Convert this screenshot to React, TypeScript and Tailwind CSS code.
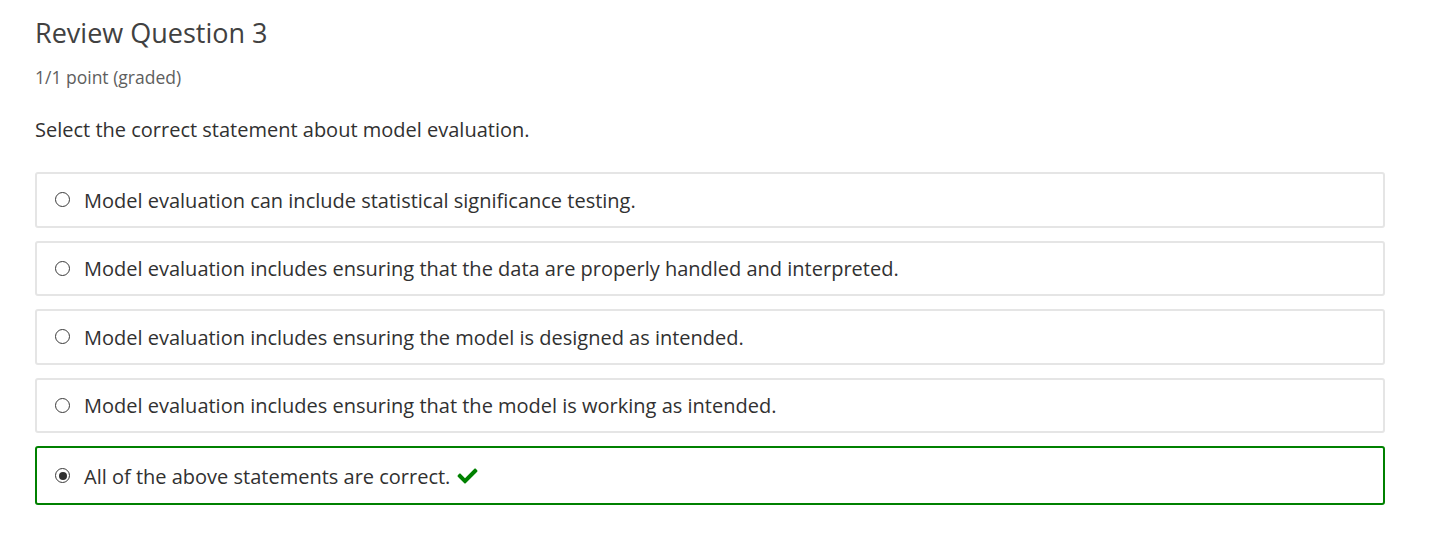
import React from 'react';

const options = [
  'Model evaluation can include statistical significance testing.',
  'Model evaluation includes ensuring that the data are properly handled and interpreted.',
  'Model evaluation includes ensuring the model is designed as intended.',
  'Model evaluation includes ensuring that the model is working as intended.',
  'All of the above statements are correct.',
];

const selected = 4;

const Radio: React.FC<{ checked: boolean }> = ({ checked }) => (
  <span className="flex h-[15px] w-[15px] shrink-0 items-center justify-center rounded-full border border-[#3a3a3a] bg-white">
    {checked && <span className="h-[8px] w-[8px] rounded-full bg-[#313131]" />}
  </span>
);

export default function App() {
  return (
    <div className="min-h-[551px] bg-white font-['Open_Sans',sans-serif] text-[#313131]">
      <div className="w-[1420px] px-[35px] pt-[16px]">
        <h3 className="text-[27px] leading-[34px] text-[#414141]">Review Question 3</h3>
        <div className="mt-[15px] text-[17.5px] leading-[24px] text-[#5e5e5e]">1/1 point (graded)</div>
        <p className="mt-[27px] text-[20px] leading-[28px]">Select the correct statement about model evaluation.</p>

        <div className="mt-[28px] flex flex-col gap-[13px]">
          {options.map((text, i) => {
            const isSel = i === selected;
            return (
              <label
                key={i}
                className={`flex items-center gap-[14px] rounded-[3px] border-2 px-[18px] ${
                  isSel ? 'h-[59px] border-[#008100]' : 'h-[55.5px] border-[#e5e5e5]'
                }`}
              >
                <Radio checked={isSel} />
                <span className="pt-[2px] text-[20px] leading-[28px]">{text}</span>
                {isSel && (
                  <svg viewBox="0 0 512 512" className="-ml-[8px] mt-[1px] h-[20px] w-[23px] fill-[#008100]">
                    <path d="M173.9 439.4l-166.4-166.4c-10-10-10-26.2 0-36.2l36.2-36.2c10-10 26.2-10 36.2 0L192 312.7 432.1 72.6c10-10 26.2-10 36.2 0l36.2 36.2c10 10 10 26.2 0 36.2L210.1 439.4c-10 10-26.2 10-36.2 0z" />
                  </svg>
                )}
              </label>
            );
          })}
        </div>
      </div>
    </div>
  );
}
